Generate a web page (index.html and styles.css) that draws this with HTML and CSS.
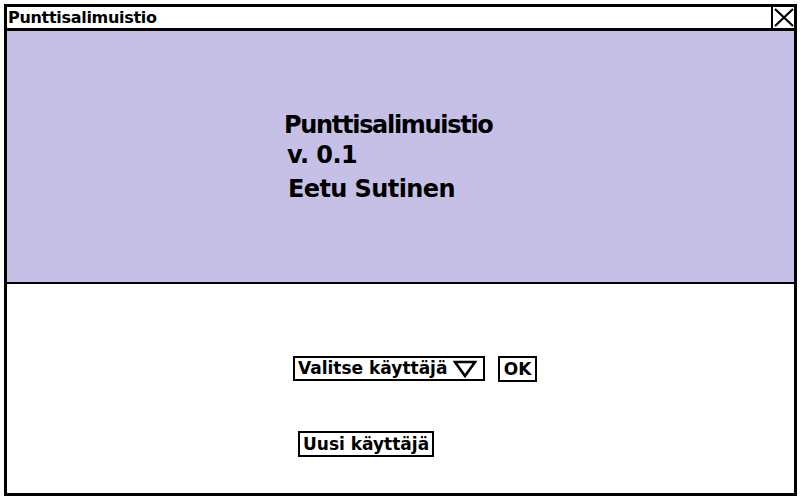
FILE: index.html
```html
<!DOCTYPE html>
<html>
<head>
<meta charset="utf-8">
<link rel="stylesheet" href="styles.css">
</head>
<body>
<div class="window">
  <div class="titlebar">
    <span class="title">Punttisalimuistio</span>
    <span class="close"><svg width="20" height="19" viewBox="0 0 20 19"><path d="M1 1 L19 18 M19 1 L1 18" stroke="#000" stroke-width="2.2" fill="none"/></svg></span>
  </div>
  <div class="banner">
    <div class="info">
      <div class="line l1">Punttisalimuistio</div>
      <div class="line l2">v. 0.1</div>
      <div class="line l3">Eetu Sutinen</div>
    </div>
  </div>
  <div class="content">
    <div class="row">
      <div class="select">Valitse käyttäjä <svg width="24" height="18" viewBox="0 0 24 18"><path d="M2 2 L22 2 L12 16 Z" stroke="#000" stroke-width="2.6" fill="none" stroke-linejoin="miter"/></svg></div>
      <div class="btn ok">OK</div>
    </div>
    <div class="row2">
      <div class="btn new">Uusi käyttäjä</div>
    </div>
  </div>
</div>
</body>
</html>
```
FILE: styles.css
```css
html, body { margin: 0; padding: 0; background: #fff; }
body { font-family: "DejaVu Sans", sans-serif; color: #000; }
.window {
  margin: 4px 0 0 4px;
  width: 787px;
  height: 486px;
  border: 3px solid #000;
  display: flex;
  flex-direction: column;
}
.titlebar {
  height: 21px;
  border-bottom: 3px solid #000;
  display: flex;
  align-items: stretch;
  justify-content: space-between;
}
.title { font-size: 16px; font-weight: bold; padding-left: 1px; line-height: 21px; letter-spacing: -0.3px; }
.close {
  width: 21px;
  border-left: 2px solid #000;
  display: flex;
  align-items: center;
  justify-content: center;
}
.banner {
  height: 251px;
  background: #c6bfe6;
  border-bottom: 2px solid #000;
}
.info { padding: 79px 0 0 277px; display: flex; flex-direction: column; }
.line { font-size: 24px; font-weight: bold; height: 30px; line-height: 30px; letter-spacing: -0.6px; }
.l1 { letter-spacing: -1.3px; }
.l2 { padding-left: 3px; margin-bottom: 4px; }
.l3 { padding-left: 4px; }
.content { flex: 1; }
.row { display: flex; gap: 13px; padding: 72px 0 0 286px; }
.select, .btn {
  border: 2px solid #000;
  font-size: 17px;
  font-weight: bold;
  height: 21px;
  line-height: 21px;
  padding: 0 3px;
  display: flex;
  align-items: center;
  gap: 4px;
}
.select { width: 182px; gap: 6px; }
.ok { width: 31px; justify-content: center; padding: 0 2px; height: 22px; }
.row2 { padding: 49px 0 0 291px; display: flex; }
.new { height: 22px; }
```
